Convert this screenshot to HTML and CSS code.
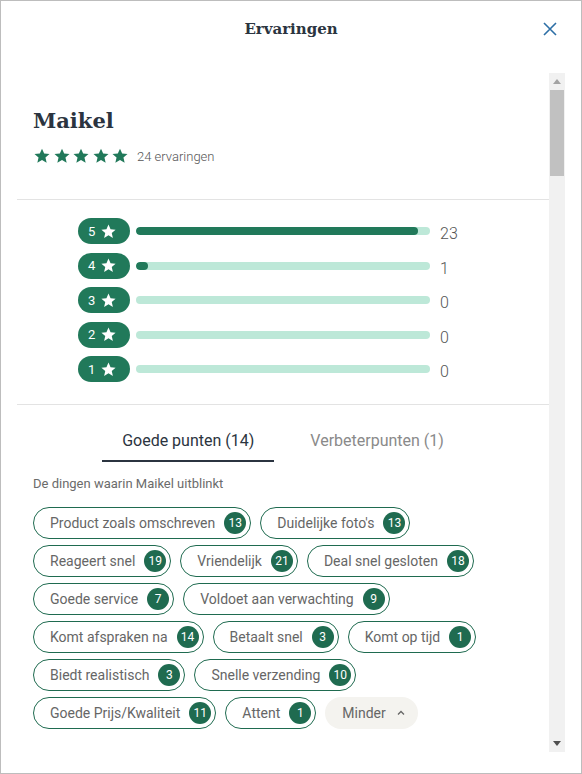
FILE: index.html
```html
<!DOCTYPE html>
<html lang="nl">
  <head>
    <meta charset="UTF-8" />
    <meta name="viewport" content="width=device-width, initial-scale=1.0" />
    <title>Ervaringen</title>
    <link rel="stylesheet" href="styles.css">
  </head>
  <body>
    <div class="modal">
      <div class="modal-header">
        <span class="modal-title">Ervaringen</span>
        <button class="modal-close" aria-label="Sluiten">
          <svg width="14" height="14" viewBox="0 0 14 14">
            <path d="M1 1 L13 13 M13 1 L1 13" stroke="#2d6fa6" stroke-width="1.6" fill="none" />
          </svg>
        </button>
      </div>

      <div class="modal-body">
        <div class="modal-content">
          <div class="section seller">
            <div class="seller-name">Maikel</div>
            <div class="seller-rating">
              <div class="stars">
                <svg viewBox="0 0 24 24"><path d="M12 2.2l2.9 6.6 7.1.6-5.4 4.7 1.6 7-6.2-3.7-6.2 3.7 1.6-7L2 9.4l7.1-.6z" /></svg>
                <svg viewBox="0 0 24 24"><path d="M12 2.2l2.9 6.6 7.1.6-5.4 4.7 1.6 7-6.2-3.7-6.2 3.7 1.6-7L2 9.4l7.1-.6z" /></svg>
                <svg viewBox="0 0 24 24"><path d="M12 2.2l2.9 6.6 7.1.6-5.4 4.7 1.6 7-6.2-3.7-6.2 3.7 1.6-7L2 9.4l7.1-.6z" /></svg>
                <svg viewBox="0 0 24 24"><path d="M12 2.2l2.9 6.6 7.1.6-5.4 4.7 1.6 7-6.2-3.7-6.2 3.7 1.6-7L2 9.4l7.1-.6z" /></svg>
                <svg viewBox="0 0 24 24"><path d="M12 2.2l2.9 6.6 7.1.6-5.4 4.7 1.6 7-6.2-3.7-6.2 3.7 1.6-7L2 9.4l7.1-.6z" /></svg>
              </div>
              <span class="rating-count">24 ervaringen</span>
            </div>
          </div>

          <div class="section distribution">
            <div class="dist-row">
              <span class="dist-pill">5 <svg viewBox="0 0 24 24"><path d="M12 2.2l2.9 6.6 7.1.6-5.4 4.7 1.6 7-6.2-3.7-6.2 3.7 1.6-7L2 9.4l7.1-.6z" /></svg></span>
              <div class="dist-bar"><div class="dist-fill" style="width: 95.8%"></div></div>
              <span class="dist-count">23</span>
            </div>
            <div class="dist-row">
              <span class="dist-pill">4 <svg viewBox="0 0 24 24"><path d="M12 2.2l2.9 6.6 7.1.6-5.4 4.7 1.6 7-6.2-3.7-6.2 3.7 1.6-7L2 9.4l7.1-.6z" /></svg></span>
              <div class="dist-bar"><div class="dist-fill" style="width: 4.2%"></div></div>
              <span class="dist-count">1</span>
            </div>
            <div class="dist-row">
              <span class="dist-pill">3 <svg viewBox="0 0 24 24"><path d="M12 2.2l2.9 6.6 7.1.6-5.4 4.7 1.6 7-6.2-3.7-6.2 3.7 1.6-7L2 9.4l7.1-.6z" /></svg></span>
              <div class="dist-bar"></div>
              <span class="dist-count">0</span>
            </div>
            <div class="dist-row">
              <span class="dist-pill">2 <svg viewBox="0 0 24 24"><path d="M12 2.2l2.9 6.6 7.1.6-5.4 4.7 1.6 7-6.2-3.7-6.2 3.7 1.6-7L2 9.4l7.1-.6z" /></svg></span>
              <div class="dist-bar"></div>
              <span class="dist-count">0</span>
            </div>
            <div class="dist-row">
              <span class="dist-pill">1 <svg viewBox="0 0 24 24"><path d="M12 2.2l2.9 6.6 7.1.6-5.4 4.7 1.6 7-6.2-3.7-6.2 3.7 1.6-7L2 9.4l7.1-.6z" /></svg></span>
              <div class="dist-bar"></div>
              <span class="dist-count">0</span>
            </div>
          </div>

          <div class="section points">
            <div class="tabs">
              <span class="tab tab-active">Goede punten (14)</span>
              <span class="tab">Verbeterpunten (1)</span>
            </div>
            <p class="points-intro">De dingen waarin Maikel uitblinkt</p>
            <div class="chips">
              <span class="chip">Product zoals omschreven <span class="chip-badge">13</span></span>
              <span class="chip">Duidelijke foto's <span class="chip-badge">13</span></span>
              <span class="chip">Reageert snel <span class="chip-badge">19</span></span>
              <span class="chip">Vriendelijk <span class="chip-badge">21</span></span>
              <span class="chip">Deal snel gesloten <span class="chip-badge">18</span></span>
              <span class="chip">Goede service <span class="chip-badge">7</span></span>
              <span class="chip">Voldoet aan verwachting <span class="chip-badge">9</span></span>
              <span class="chip">Komt afspraken na <span class="chip-badge">14</span></span>
              <span class="chip">Betaalt snel <span class="chip-badge">3</span></span>
              <span class="chip">Komt op tijd <span class="chip-badge">1</span></span>
              <span class="chip">Biedt realistisch <span class="chip-badge">3</span></span>
              <span class="chip">Snelle verzending <span class="chip-badge">10</span></span>
              <span class="chip">Goede Prijs/Kwaliteit <span class="chip-badge">11</span></span>
              <span class="chip">Attent <span class="chip-badge">1</span></span>
              <button class="chip-less">Minder
                <svg width="10" height="10" viewBox="0 0 10 10"><path d="M2 6.5 L5 3.5 L8 6.5" stroke="#666" stroke-width="1.3" fill="none" /></svg>
              </button>
            </div>
          </div>
        </div>

        <div class="scrollbar">
          <span class="scroll-arrow">
            <svg width="8" height="5" viewBox="0 0 8 5"><path d="M0 5 L4 0 L8 5 Z" fill="#a3a3a3" /></svg>
          </span>
          <div class="scroll-track"><div class="scroll-thumb"></div></div>
          <span class="scroll-arrow">
            <svg width="8" height="5" viewBox="0 0 8 5"><path d="M0 0 L4 5 L8 0 Z" fill="#505050" /></svg>
          </span>
        </div>
      </div>
    </div>
  </body>
</html>
```

FILE: styles.css
```css
* {
  box-sizing: border-box;
}
body {
  margin: 0;
  font-family: Roboto, "Liberation Sans", sans-serif;
  background-color: #fff;
}
.modal {
  height: 774px;
  border: 1px solid #bdbdbd;
  padding: 0 16px 21px;
  display: flex;
  flex-direction: column;
}
.modal-header {
  height: 72px;
  display: flex;
  justify-content: center;
  align-items: flex-start;
  padding-top: 17px;
  position: relative;
}
.modal-title {
  font-family: "DejaVu Serif", serif;
  font-weight: bold;
  font-size: 15px;
  line-height: 22px;
  color: #2b3440;
}
.modal-close {
  position: absolute;
  right: 8px;
  top: 21px;
  border: none;
  background: none;
  padding: 0;
  width: 14px;
  height: 14px;
  display: flex;
}
.modal-body {
  flex: 1;
  display: flex;
}
.modal-content {
  flex: 1;
}
.section {
  padding: 0 16px;
  border-bottom: 1px solid #e3e3e3;
}
.section:last-child {
  border-bottom: none;
}
.seller {
  padding-top: 33px;
  padding-bottom: 33px;
}
.seller-name {
  font-family: "DejaVu Serif", serif;
  font-weight: bold;
  font-size: 21px;
  line-height: 30px;
  color: #2b3440;
}
.seller-rating {
  display: flex;
  align-items: center;
  gap: 8px;
  margin-top: 10px;
  height: 20px;
}
.stars {
  display: flex;
  gap: 1.5px;
}
.stars svg {
  width: 18px;
  height: 18px;
  fill: #21795a;
}
.rating-count {
  font-size: 13px;
  color: #555;
  font-weight: 300;
}
.distribution {
  padding-top: 18px;
  padding-bottom: 22px;
  display: flex;
  flex-direction: column;
  align-items: center;
  gap: 8.6px;
}
.dist-row {
  width: 410px;
  height: 26px;
  display: flex;
  align-items: center;
}
.dist-pill {
  width: 52px;
  height: 26px;
  border-radius: 13px;
  background-color: #21795a;
  color: #fff;
  font-size: 13px;
  display: flex;
  align-items: center;
  padding-left: 10px;
  gap: 5px;
}
.dist-pill svg {
  width: 17px;
  height: 17px;
  fill: #fff;
}
.dist-bar {
  width: 294px;
  height: 8px;
  margin-left: 6px;
  border-radius: 4px;
  background-color: #bde8d8;
  overflow: hidden;
}
.dist-fill {
  height: 100%;
  border-radius: 4px;
  background-color: #21795a;
}
.dist-count {
  margin: 5px 0 0 10px;
  font-size: 16px;
  font-weight: 300;
  color: #555;
}
.points {
  padding-top: 24px;
}
.tabs {
  display: flex;
  justify-content: center;
  gap: 16px;
}
.tab {
  padding: 0 20px 7px;
  font-size: 16px;
  line-height: 24px;
  color: #8a8a8a;
  border-bottom: 2px solid transparent;
}
.tab-active {
  color: #2b3440;
  border-bottom-color: #2b3440;
}
.points-intro {
  margin: 13px 0 0;
  font-size: 13px;
  line-height: 18px;
  color: #6b6b6b;
}
.chips {
  margin-top: 14px;
  display: flex;
  flex-wrap: wrap;
  gap: 6px 9px;
}
.chip {
  height: 32px;
  border: 1px solid #1f6b50;
  border-radius: 16px;
  padding: 0 4px 0 16px;
  display: flex;
  align-items: center;
  gap: 9px;
  font-size: 14px;
  color: #666;
}
.chip-badge {
  min-width: 22px;
  height: 22px;
  border-radius: 11px;
  background-color: #1f6b50;
  color: #fff;
  font-size: 12px;
  display: flex;
  align-items: center;
  justify-content: center;
}
.chip-less {
  height: 32px;
  border: none;
  border-radius: 16px;
  background-color: #f4f3ef;
  padding: 0 12px 0 17px;
  display: flex;
  align-items: center;
  gap: 10px;
  font-family: Roboto, "Liberation Sans", sans-serif;
  font-size: 14px;
  color: #666;
}
.scrollbar {
  width: 16px;
  display: flex;
  flex-direction: column;
  background-color: #f1f1f1;
}
.scroll-arrow {
  height: 17px;
  display: flex;
  align-items: center;
  justify-content: center;
}
.scroll-track {
  flex: 1;
  padding: 0 1px;
}
.scroll-thumb {
  height: 86px;
  background-color: #c1c1c1;
}
```
